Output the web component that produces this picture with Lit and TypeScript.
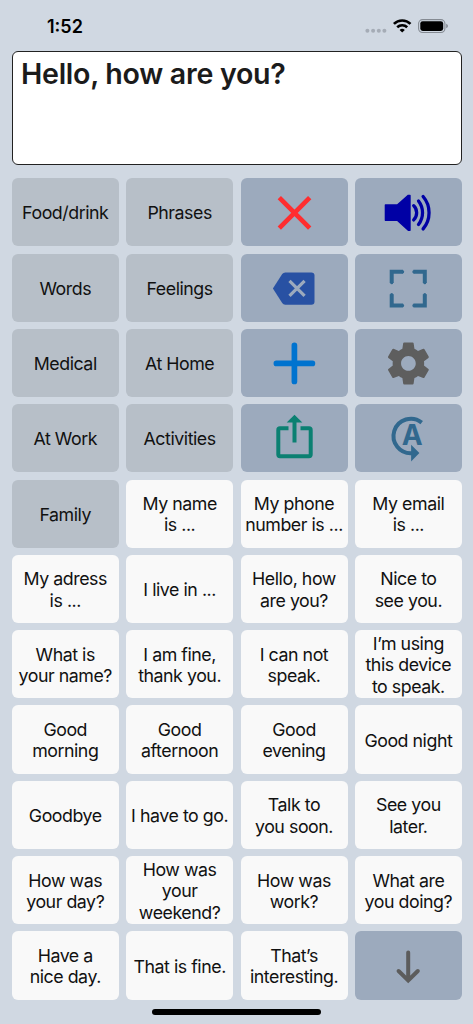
import { LitElement, html, svg, css, TemplateResult, SVGTemplateResult } from "lit";
import { customElement, property } from "lit/decorators.js";

type Kind = "category" | "phrase" | "action";

interface Tile {
  kind: Kind;
  lines?: string[];
  icon?: string;
}

const category = (label: string): Tile => ({ kind: "category", lines: [label] });
const phrase = (...lines: string[]): Tile => ({ kind: "phrase", lines });
const action = (icon: string): Tile => ({ kind: "action", icon });

const TILES: Tile[] = [
  category("Food/drink"), category("Phrases"), action("clear"), action("speak"),
  category("Words"), category("Feelings"), action("backspace"), action("fullscreen"),
  category("Medical"), category("At Home"), action("add"), action("settings"),
  category("At Work"), category("Activities"), action("share"), action("autospeak"),
  category("Family"), phrase("My name", "is ..."), phrase("My phone", "number is ..."), phrase("My email", "is ..."),
  phrase("My adress", "is ..."), phrase("I live in ..."), phrase("Hello, how", "are you?"), phrase("Nice to", "see you."),
  phrase("What is", "your name?"), phrase("I am fine,", "thank you."), phrase("I can not", "speak."), phrase("I’m using", "this device", "to speak."),
  phrase("Good", "morning"), phrase("Good", "afternoon"), phrase("Good", "evening"), phrase("Good night"),
  phrase("Goodbye"), phrase("I have to go."), phrase("Talk to", "you soon."), phrase("See you", "later."),
  phrase("How was", "your day?"), phrase("How was", "your", "weekend?"), phrase("How was", "work?"), phrase("What are", "you doing?"),
  phrase("Have a", "nice day."), phrase("That is fine."), phrase("That’s", "interesting."), action("down"),
];

/* Icons are drawn around the centre of their tile. */
const ICONS: Record<string, SVGTemplateResult> = {
  clear: svg`<path d="M-15.2 -14.6L15.2 15.8M15.2 -14.6L-15.2 15.8" fill="none" stroke="#ff2d2f" stroke-width="4.7"/>`,
  speak: svg`<g fill="#0000a5" stroke="#0000a5" stroke-linejoin="round" stroke-linecap="round">
    <path stroke-width="1.4" d="M-23.1 -7.3H-11.2L-.2 -16.9H1.5V17.9H-.2L-11.2 8H-23.1Z"/>
    <path fill="none" stroke-width="3.3" d="M5.2 -6.6A10 10 0 0 1 5.2 7.6M10 -11.2A19 19 0 0 1 10 12.2M14.6 -15.8A25 25 0 0 1 14.6 16.6"/></g>`,
  backspace: svg`<path fill="#2851a3" d="M-21.6 .2L-12.3 -14.2Q-11.2 -15.9 -9.2 -15.9H16.8Q20 -15.9 20 -12.7V13.2Q20 16.4 16.8 16.4H-9.2Q-11.2 16.4 -12.3 14.8Z"/>
    <path d="M-5 -7.4L10.1 7.6M10.1 -7.4L-5 7.6" stroke="#9caabd" stroke-width="3.2" fill="none"/>`,
  fullscreen: svg`<path fill="none" stroke="#31688e" stroke-width="4" d="M-16.8 -5.2V-16.6H-5.4M4.9 -16.6H16.3V-5.2M16.3 5.9V17.2H4.9M-5.4 17.2H-16.8V5.9"/>
    <path fill="none" stroke="#31688e" stroke-width="3" stroke-linecap="round" d="M-16.8 -6V-5.6M-6.2 -16.6H-5.8M5.7 -16.6H5.3M16.3 -6V-5.6M16.3 6.7V6.3M5.7 17.2H5.3M-6.2 17.2H-5.8M-16.8 6.7V6.3"/>`,
  add: svg`<path fill="none" stroke="#0073cf" stroke-width="5.7" stroke-linecap="round" d="M-18.1 .1H17.9M-.1 -17.9V18.1"/>`,
  settings: svg`<path fill="#5e5e5e" transform="translate(-25.3 -25.1) scale(2.1)" d="M19.43 12.98c.04-.32.07-.64.07-.98s-.03-.66-.07-.98l2.11-1.65c.19-.15.24-.42.12-.64l-2-3.46c-.12-.22-.39-.3-.61-.22l-2.49 1c-.52-.4-1.08-.73-1.69-.98l-.38-2.65C14.46 2.18 14.25 2 14 2h-4c-.25 0-.46.18-.49.42l-.38 2.65c-.61.25-1.17.59-1.69.98l-2.49-1c-.23-.09-.49 0-.61.22l-2 3.46c-.13.22-.07.49.12.64l2.11 1.65c-.04.32-.07.65-.07.98s.03.66.07.98l-2.11 1.65c-.19.15-.24.42-.12.64l2 3.46c.12.22.39.3.61.22l2.49-1c.52.4 1.08.73 1.69.98l.38 2.65c.03.24.24.42.49.42h4c.25 0 .46-.18.49-.42l.38-2.65c.61-.25 1.17-.59 1.69-.98l2.49 1c.23.09.49 0 .61-.22l2-3.46c.12-.22.07-.49-.12-.64l-2.11-1.65zM12 15.5c-1.93 0-3.5-1.57-3.5-3.5s1.57-3.5 3.5-3.5 3.5 1.57 3.5 3.5-1.57 3.5-3.5 3.5z"/>`,
  share: svg`<path fill="none" stroke="#0b8072" stroke-width="4" d="M-6 -10.1H-14.5Q-16.2 -10.1 -16.2 -8.4V16.3Q-16.2 18 -14.5 18H14.5Q16.2 18 16.2 16.3V-8.4Q16.2 -10.1 14.5 -10.1H6M0 -17V4.1"/>
    <path fill="#0b8072" d="M0 -23.5L7.8 -15.7H-7.8Z"/>`,
  autospeak: svg`<path fill="none" stroke="#31688e" stroke-width="4" d="M13.2 -15.7A17.3 17.3 0 1 0 3.6 15"/>
    <path fill="#31688e" d="M2.6 6.5L10.9 14.8L2.6 23.1Z"/>
    <text class="glyph" x="3.6" y="7" text-anchor="middle" fill="#31688e">A</text>`,
  down: svg`<path fill="none" stroke="#5c5c5c" stroke-width="4" stroke-linecap="round" d="M-.3 -13.8V13.2M-9.9 4.7L-.3 14.1L9.3 4.7"/>`,
};

@customElement("talk-tile")
class TalkTile extends LitElement {
  @property({ attribute: false }) tile!: Tile;

  static styles = css`
    :host { display: block; min-width: 0; }
    .tile {
      box-sizing: border-box; width: 100%; height: 100%;
      display: flex; align-items: center; justify-content: center;
      border-radius: 6px; text-align: center; white-space: nowrap;
      font: 400 17.8px/21.3px Inter, "Liberation Sans", sans-serif;
      letter-spacing: -0.46px; color: #111; overflow: hidden;
    }
    .category { background: #b7bfc8; }
    .phrase { background: #f9f9f9; }
    .action { background: #9caabd; }
    .label { padding: 1.3px 0.6px 0 0; }
    .line { display: block; }
    .icon { display: block; flex: none; }
    .glyph { font: 700 28px Inter, "Liberation Sans", sans-serif; letter-spacing: 0; }
  `;

  render(): TemplateResult {
    const { kind, lines, icon } = this.tile;
    return html`<div class="tile ${kind}">
      ${icon
        ? html`<svg class="icon" width="107" height="68" viewBox="-53.5 -34.3 107 68">${ICONS[icon]}</svg>`
        : html`<div class="label">${lines!.map((l) => html`<span class="line">${l}</span>`)}</div>`}
    </div>`;
  }
}

@customElement("app-root")
class AppRoot extends LitElement {
  static styles = css`
    :host {
      display: flex; flex-direction: column; box-sizing: border-box;
      width: 473px; height: 1024px; background: #d0d8e2; overflow: hidden;
      font-family: Inter, "Liberation Sans", sans-serif;
    }
    .status {
      height: 51px; box-sizing: border-box; flex: none;
      display: flex; justify-content: space-between; align-items: flex-start;
      padding: 15px 24px 0 47px;
    }
    .time { font-size: 18px; line-height: 23px; font-weight: 600; color: #000; }
    .message {
      height: 114px; box-sizing: border-box; flex: none;
      margin: 0 10.8px 0 12px; padding: 4px 8px;
      border: 1.3px solid #222; border-radius: 6px; background: #fff;
      font-size: 28.6px; line-height: 35px; font-weight: 600; color: #1b1b1b;
      letter-spacing: -0.29px;
    }
    .grid {
      flex: none; margin: 13.2px 10.8px 0 12px;
      display: grid; grid-template-columns: repeat(4, 1fr);
      grid-auto-rows: 68.25px; gap: 7.08px 7.3px;
    }
    .home {
      width: 169px; height: 6px; margin: 9.3px auto 0; border-radius: 3px;
      background: #000; flex: none;
    }
  `;

  render(): TemplateResult {
    return html`
      <div class="status">
        <span class="time">1:52</span>
        <svg width="84" height="20" viewBox="365 15 84 20">
          <g fill="#a5acb6">
            <circle cx="367.4" cy="30.7" r="2"/><circle cx="373.1" cy="30.7" r="2"/>
            <circle cx="378.8" cy="30.7" r="2"/><circle cx="384.4" cy="30.7" r="2"/>
          </g>
          <g fill="none" stroke="#000" stroke-width="2.6">
            <path d="M393.9 23.9A11.8 11.8 0 0 1 410.5 23.9"/>
            <path d="M397.2 27.3A7.2 7.2 0 0 1 407.2 27.3"/>
          </g>
          <path d="M402.2 32.6L399.6 30A3.8 3.8 0 0 1 404.8 30Z"/>
          <rect x="418.6" y="19.6" width="26.3" height="12.9" rx="4" fill="none" stroke="#858b93" stroke-width="1.1"/>
          <rect x="420.3" y="21.2" width="22.9" height="9.7" rx="2.4"/>
          <path fill="#858b93" d="M446.2 23.8Q448 24.5 448 26T446.2 28.3Z"/>
        </svg>
      </div>
      <div class="message">Hello, how are you?</div>
      <div class="grid">${TILES.map((t) => html`<talk-tile .tile=${t}></talk-tile>`)}</div>
      <div class="home"></div>
    `;
  }
}
